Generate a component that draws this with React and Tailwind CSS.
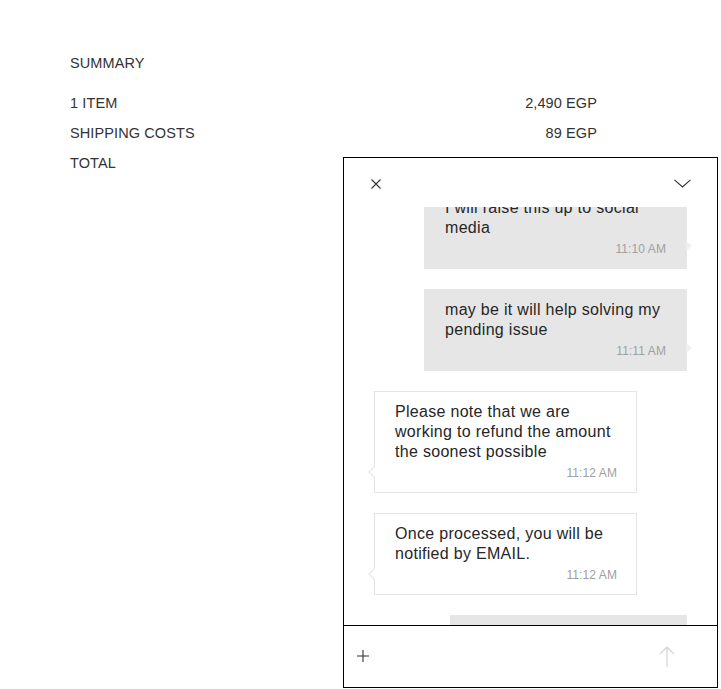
import React from "react";

const font = { fontFamily: '"Liberation Sans", Arial, sans-serif' };

function Out({ lines, time, w = "w-[263px]", tail = true }) {
  return (
    <div className={`relative self-end mr-[30px] ${w} bg-[#e6e6e6] border border-[#e6e6e6] pl-[20px] pr-[20px] pt-[10px] pb-[8px]`}>
      <div className="text-[16px] leading-[20px] tracking-[0.3px] text-[#262626]">
        {lines.map((l, i) => (
          <div key={i}>{l}</div>
        ))}
      </div>
      <div className="text-right text-[12px] leading-[22px] tracking-[0.1px] text-[#a0a0a0]">{time}</div>
      {tail && (
        <div className="absolute right-[-6px] bottom-[17px] w-0 h-0 border-y-[5px] border-y-transparent border-l-[6px] border-l-[#efefef]" />
      )}
    </div>
  );
}

function In({ lines, time }) {
  return (
    <div className="relative self-start ml-[30px] w-[263px] bg-white border border-[#e4e4e4] pl-[20px] pr-[19px] pt-[10px] pb-[8px]">
      <div className="text-[16px] leading-[20px] tracking-[0.3px] text-[#262626]">
        {lines.map((l, i) => (
          <div key={i}>{l}</div>
        ))}
      </div>
      <div className="text-right text-[12px] leading-[22px] tracking-[0.1px] text-[#a0a0a0]">{time}</div>
      <div className="absolute left-[-5px] bottom-[16px] w-[8px] h-[8px] bg-white border-l border-b border-[#e4e4e4] rotate-45" />
    </div>
  );
}

export default function App() {
  return (
    <div className="relative w-[721px] h-[689px] bg-white overflow-hidden" style={font}>
      <div className="pl-[70px] pt-[55px] w-[597px] text-[14.5px] leading-[16px] tracking-[0.1px] text-[#333]">
        <div>SUMMARY</div>
        <div className="mt-[24px] flex flex-col gap-[14px]">
          <div className="flex justify-between">
            <span>1 ITEM</span>
            <span>2,490 EGP</span>
          </div>
          <div className="flex justify-between">
            <span>SHIPPING COSTS</span>
            <span>89 EGP</span>
          </div>
          <div className="flex justify-between">
            <span>TOTAL</span>
            <span></span>
          </div>
        </div>
      </div>

      <div className="absolute left-[343px] top-[157px] w-[375px] h-[531px] border border-black bg-white flex flex-col">
        <div className="h-[49px] shrink-0 flex items-start justify-between pt-[20px] pl-[27px] pr-[26px]">
          <svg width="10" height="10" viewBox="0 0 10 10" className="mt-[1px]">
            <path d="M0.5 0.5 L9.5 9.5 M9.5 0.5 L0.5 9.5" stroke="#333" strokeWidth="1.1" fill="none" />
          </svg>
          <svg width="17" height="9" viewBox="0 0 17 9" className="mt-[1px]">
            <path d="M0.5 0.8 L8.5 8 L16.5 0.8" stroke="#333" strokeWidth="1.1" fill="none" />
          </svg>
        </div>
        <div className="h-[418px] shrink-0 overflow-hidden">
          <div className="flex flex-col gap-[20px] mt-[-20px]">
            <Out lines={["I will raise this up to social", "media"]} time="11:10 AM" />
            <Out lines={["may be it will help solving my", "pending issue"]} time="11:11 AM" />
            <In lines={["Please note that we are", "working to refund the amount", "the soonest possible"]} time="11:12 AM" />
            <In lines={["Once processed, you will be", "notified by EMAIL."]} time="11:12 AM" />
            <Out lines={["Thank you"]} time="11:13 AM" w="w-[237px]" tail={false} />
          </div>
        </div>
        <div className="flex-1 border-t border-black flex items-center justify-between pl-[13px] pr-[42px]">
          <svg width="12" height="12" viewBox="0 0 12 12" className="mt-[-2px]">
            <path d="M6 0 V12 M0 6 H12" stroke="#333" strokeWidth="1.1" fill="none" />
          </svg>
          <svg width="16" height="21" viewBox="0 0 16 21">
            <path d="M8 1 V21 M1 8 L8 1 L15 8" stroke="#d4d4d4" strokeWidth="1.2" fill="none" />
          </svg>
        </div>
      </div>
    </div>
  );
}
